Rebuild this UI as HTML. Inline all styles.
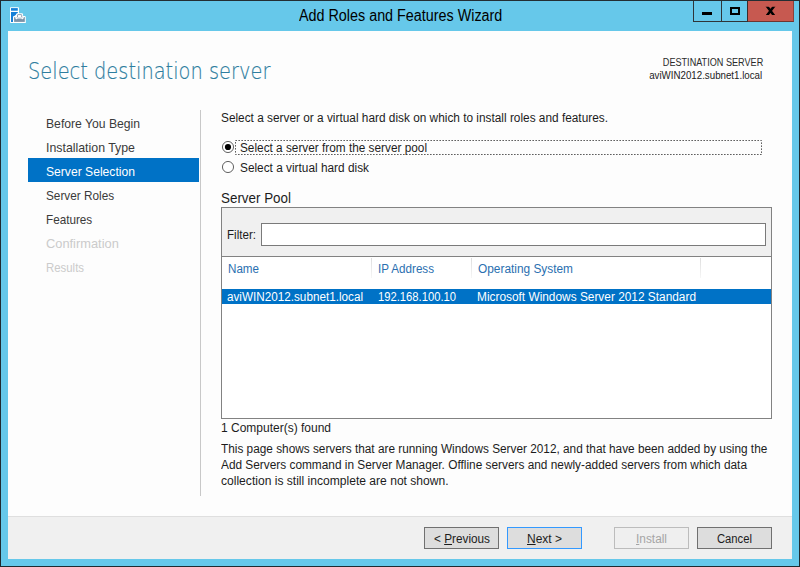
<!DOCTYPE html>
<html><head><meta charset="utf-8"><title>Add Roles and Features Wizard</title>
<style>
html,body{margin:0;padding:0;}
body{width:800px;height:567px;overflow:hidden;background:#66c8ea;position:relative;font-family:"Liberation Sans", sans-serif;}
.a{position:absolute;box-sizing:border-box;}
.t{position:absolute;white-space:nowrap;font-family:"Liberation Sans", sans-serif;}
u{text-decoration:underline;text-underline-offset:1px;text-decoration-thickness:1px;}
</style></head><body>
<!-- window frame -->
<div class="a" style="left:0;top:0;width:800px;height:567px;border:1px solid #1f2a30;border-top-color:#232e33;"></div>
<!-- content -->
<div class="a" style="left:8px;top:31px;width:784px;height:528px;background:#fdfdfd;"></div>
<!-- footer -->
<div class="a" style="left:8px;top:516px;width:784px;height:43px;background:#f0f0f0;border-top:1px solid #dfdfdf;"></div>
<!-- caption buttons -->
<div class="a" style="left:693px;top:1px;width:55px;height:21px;border:1px solid #2f3538;border-top:none;border-right:none;"></div>
<div class="a" style="left:748px;top:1px;width:46px;height:21px;background:#c75950;border-bottom:1px solid #6e3430;border-right:1px solid #8a423d;"></div>
<div class="a" style="left:721px;top:1px;width:1px;height:20px;background:#2f3538;"></div>
<div class="a" style="left:747px;top:1px;width:1px;height:21px;background:#3a2c2c;"></div>
<div class="a" style="left:702px;top:12px;width:10px;height:3px;background:#000;"></div>
<div class="a" style="left:730px;top:7px;width:10px;height:8px;border:2px solid #000;"></div>
<svg class="a" style="left:760px;top:0px" width="22" height="22" viewBox="760 0 22 22"><defs><clipPath id="cx"><rect x="760" y="6.8" width="22" height="8.3"/></clipPath></defs><g clip-path="url(#cx)"><path d="M766.04 5 L774.96 16.8 M774.96 5 L766.04 16.8" stroke="#000" stroke-width="2.5" fill="none"/></g></svg>
<!-- app icon -->
<svg class="a" style="left:0;top:0" width="32" height="28" viewBox="0 0 32 28">
<rect x="10" y="7.2" width="9" height="15.8" rx="0.8" fill="#fff"/>
<rect x="11" y="8.1" width="6.8" height="2.6" fill="#1580d8"/>
<path d="M11 12 H17.8 V13.2 L13 17 V21.9 H11 Z" fill="#1580d8"/>
<path d="M13.1 23 V17.2 Q13.1 16 14.3 16 H16.1 V14.6 Q16.1 13.2 17.5 13.2 H21.7 Q23.1 13.2 23.1 14.6 V16 H24.6 Q25.8 16 25.8 17.2 V23 Z" fill="#fff"/>
<rect x="14.1" y="17" width="10.7" height="4.9" fill="#7b93a9"/>
<path d="M17.5 17 V15.1 Q17.5 14.6 18 14.6 H21.2 Q21.7 14.6 21.7 15.1 V17" stroke="#8299ae" stroke-width="0.9" fill="none"/>
<path d="M14.6 17.3 H24.3 L23.6 18.4 H23.1 L22.6 19.3 H21.9 L21.5 18.4 H17.4 L17 19.3 H16.3 L15.8 18.4 H15.3 Z" fill="#fff"/>
</svg>
<!-- nav -->
<div class="a" style="left:28px;top:158px;width:171px;height:24px;background:#0072c6;"></div>
<div class="a" style="left:200px;top:110px;width:1px;height:386px;background:#c8c8c8;"></div>
<!-- radios -->
<svg class="a" style="left:216px;top:136px" width="550" height="42" viewBox="216 136 550 42">
<circle cx="228" cy="147" r="5.55" fill="#fff" stroke="#444" stroke-width="0.85"/>
<circle cx="228" cy="147" r="3.1" fill="#000"/>
<circle cx="228" cy="167" r="5.55" fill="#fff" stroke="#444" stroke-width="0.85"/>
<rect x="235.5" y="140.5" width="526" height="14" fill="none" stroke="#3a3a3a" stroke-width="1" stroke-dasharray="1.3 1.7"/>
</svg>
<!-- server pool box -->
<div class="a" style="left:221px;top:207px;width:551px;height:212px;border:1px solid #828282;background:#fff;"></div>
<div class="a" style="left:222px;top:208px;width:549px;height:49px;background:#f0f0f0;border-bottom:1px solid #828282;"></div>
<div class="a" style="left:261px;top:223px;width:505px;height:23px;border:1px solid #7a7a7a;background:#fff;"></div>
<div class="a" style="left:371px;top:258px;width:1px;height:20px;background:linear-gradient(#dedede,#f6f6f6);"></div>
<div class="a" style="left:471px;top:258px;width:1px;height:20px;background:linear-gradient(#dedede,#f6f6f6);"></div>
<div class="a" style="left:700px;top:258px;width:1px;height:20px;background:linear-gradient(#dedede,#f6f6f6);"></div>
<div class="a" style="left:222px;top:289px;width:549px;height:15px;background:#0072c6;"></div>
<!-- buttons -->
<div class="a" style="left:424px;top:527px;width:75px;height:22px;border:1px solid #707070;background:#dddddd;"></div>
<div class="a" style="left:507px;top:527px;width:75px;height:22px;border:1px solid #3399ff;background:#dddddd;"></div>
<div class="a" style="left:614px;top:527px;width:75px;height:22px;border:1px solid #bcbcbc;background:#efefef;"></div>
<div class="a" style="left:697px;top:527px;width:75px;height:22px;border:1px solid #707070;background:#dddddd;"></div>
<div class="t" id="title" style="left:298.5px;transform-origin:0 0;top:8.00px;font-size:15.8px;line-height:15.8px;color:#000;transform:scaleX(0.9080);">Add Roles and Features Wizard</div>
<div class="t" id="h1" style="left:28.4px;transform-origin:0 0;top:60.00px;font-size:23px;line-height:23px;color:#2e7d9f;transform:scaleX(0.8438);font-family:'DejaVu Sans Light','DejaVu Sans','Liberation Sans',sans-serif;font-weight:200;-webkit-text-stroke:0.18px #2e7d9f;">Select destination server</div>
<div class="t" id="ds1" style="right:37px;transform-origin:100% 0;top:58.00px;font-size:10px;line-height:10px;color:#2a2a2a;transform:scaleX(0.9109);">DESTINATION SERVER</div>
<div class="t" id="ds2" style="right:38px;transform-origin:100% 0;top:71.00px;font-size:10px;line-height:10px;color:#222;transform:scaleX(0.9726);">aviWIN2012.subnet1.local</div>
<div class="t" id="nav0" style="left:46px;transform-origin:0 0;top:117.00px;font-size:13px;line-height:13px;color:#3a3a3a;transform:scaleX(0.9365);">Before You Begin</div>
<div class="t" id="nav1" style="left:46px;transform-origin:0 0;top:141.00px;font-size:13px;line-height:13px;color:#3a3a3a;transform:scaleX(0.9496);">Installation Type</div>
<div class="t" id="nav2" style="left:46px;transform-origin:0 0;top:165.00px;font-size:13px;line-height:13px;color:#fff;transform:scaleX(0.9330);">Server Selection</div>
<div class="t" id="nav3" style="left:46px;transform-origin:0 0;top:189.00px;font-size:13px;line-height:13px;color:#3a3a3a;transform:scaleX(0.9063);">Server Roles</div>
<div class="t" id="nav4" style="left:46px;transform-origin:0 0;top:213.00px;font-size:13px;line-height:13px;color:#3a3a3a;transform:scaleX(0.9004);">Features</div>
<div class="t" id="nav5" style="left:46px;transform-origin:0 0;top:237.00px;font-size:13px;line-height:13px;color:#cbcbcb;transform:scaleX(0.9877);">Confirmation</div>
<div class="t" id="nav6" style="left:46px;transform-origin:0 0;top:261.00px;font-size:13px;line-height:13px;color:#cbcbcb;transform:scaleX(0.8764);">Results</div>
<div class="t" id="intro" style="left:221px;transform-origin:0 0;top:112.00px;font-size:12px;line-height:12px;color:#1c1c1c;transform:scaleX(0.9867);">Select a server or a virtual hard disk on which to install roles and features.</div>
<div class="t" id="r1" style="left:240px;transform-origin:0 0;top:142.00px;font-size:12px;line-height:12px;color:#1c1c1c;transform:scaleX(0.9838);">Select a server from the server pool</div>
<div class="t" id="r2" style="left:240px;transform-origin:0 0;top:162.00px;font-size:12px;line-height:12px;color:#1c1c1c;transform:scaleX(0.9867);">Select a virtual hard disk</div>
<div class="t" id="sp" style="left:221px;transform-origin:0 0;top:191.00px;font-size:14.5px;line-height:14.5px;color:#1c1c1c;transform:scaleX(0.9239);">Server Pool</div>
<div class="t" id="filter" style="left:227px;transform-origin:0 0;top:229.00px;font-size:12px;line-height:12px;color:#1c1c1c;transform:scaleX(0.9667);">Filter:</div>
<div class="t" id="c1" style="left:228px;transform-origin:0 0;top:263.00px;font-size:12px;line-height:12px;color:#2a6fb0;transform:scaleX(0.9683);">Name</div>
<div class="t" id="c2" style="left:378px;transform-origin:0 0;top:263.00px;font-size:12px;line-height:12px;color:#2a6fb0;transform:scaleX(0.9684);">IP Address</div>
<div class="t" id="c3" style="left:478px;transform-origin:0 0;top:263.00px;font-size:12px;line-height:12px;color:#2a6fb0;transform:scaleX(0.9891);">Operating System</div>
<div class="t" id="d1" style="left:227px;transform-origin:0 0;top:291.00px;font-size:12px;line-height:12px;color:#fff;transform:scaleX(0.9755);">aviWIN2012.subnet1.local</div>
<div class="t" id="d2" style="left:378px;transform-origin:0 0;top:291.00px;font-size:12px;line-height:12px;color:#fff;transform:scaleX(0.9350);">192.168.100.10</div>
<div class="t" id="d3" style="left:477px;transform-origin:0 0;top:291.00px;font-size:12px;line-height:12px;color:#fff;transform:scaleX(0.9890);">Microsoft Windows Server 2012 Standard</div>
<div class="t" id="found" style="left:221px;transform-origin:0 0;top:422.00px;font-size:12px;line-height:12px;color:#1c1c1c;transform:scaleX(0.9994);">1 Computer(s) found</div>
<div class="t" id="p1" style="left:221px;transform-origin:0 0;top:443.00px;font-size:12px;line-height:12px;color:#1c1c1c;transform:scaleX(0.9843);">This page shows servers that are running Windows Server 2012, and that have been added by using the</div>
<div class="t" id="p2" style="left:221px;transform-origin:0 0;top:459.00px;font-size:12px;line-height:12px;color:#1c1c1c;transform:scaleX(0.9874);">Add Servers command in Server Manager. Offline servers and newly-added servers from which data</div>
<div class="t" id="p3" style="left:221px;transform-origin:0 0;top:475.00px;font-size:12px;line-height:12px;color:#1c1c1c;transform:scaleX(1.0066);">collection is still incomplete are not shown.</div>
<div class="t" id="b1" style="left:434px;transform-origin:0 0;top:533.00px;font-size:12px;line-height:12px;color:#1c1c1c;transform:scaleX(0.9816);">&lt; <u>P</u>revious</div>
<div class="t" id="b2" style="left:527px;transform-origin:0 0;top:533.00px;font-size:12px;line-height:12px;color:#1c1c1c;transform:scaleX(0.9991);"><u>N</u>ext &gt;</div>
<div class="t" id="b3" style="left:636px;transform-origin:0 0;top:533.00px;font-size:12px;line-height:12px;color:#a5a5a5;transform:scaleX(0.9885);"><u>I</u>nstall</div>
<div class="t" id="b4" style="left:717px;transform-origin:0 0;top:533.00px;font-size:12px;line-height:12px;color:#1c1c1c;transform:scaleX(0.9368);">Cancel</div>
</body></html>
